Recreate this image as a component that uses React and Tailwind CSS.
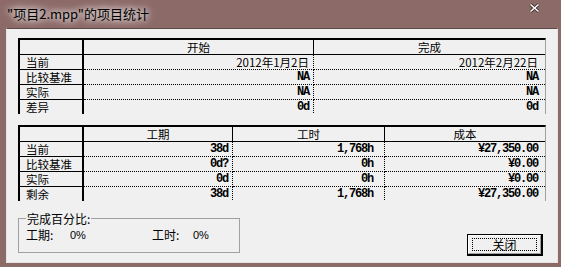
const cjk = "font-['Noto_Sans_CJK_SC',sans-serif]";
const mono = "font-['Liberation_Mono','Noto_Sans_CJK_SC',monospace]";

const table1 = {
  heads: ["开始", "完成"],
  widths: ["w-[230px]", "w-[231px]"],
  pads: ["pr-[4px]", "pr-[7px]"],
  rows: [
    { label: "当前", cells: ["2012年1月2日", "2012年2月22日"], cjk: true },
    { label: "比较基准", cells: ["NA", "NA"] },
    { label: "实际", cells: ["NA", "NA"] },
    { label: "差异", cells: ["0d", "0d"] },
  ],
};

const table2 = {
  heads: ["工期", "工时", "成本"],
  widths: ["w-[149px]", "w-[152px]", "w-[160px]"],
  pads: ["pr-[4px]", "pr-[11px]", "pr-[7px]"],
  rows: [
    { label: "当前", cells: ["38d", "1,768h", "¥27,350.00"] },
    { label: "比较基准", cells: ["0d?", "0h", "¥0.00"] },
    { label: "实际", cells: ["0d", "0h", "¥0.00"] },
    { label: "剩余", cells: ["38d", "1,768h", "¥27,350.00"] },
  ],
};

function StatTable({ heads, widths, pads, rows }) {
  return (
    <div className="h-[76px] w-[528px] overflow-hidden border-t-2 border-l-2 border-r border-black border-r-[#a0a0a0] text-black">
      {/* header */}
      <div className="flex h-[15px]">
        <div className="w-[64px] shrink-0 border-r-2 border-b border-black" />
        {heads.map((h, i) => (
          <div
            key={h}
            className={`${widths[i]} shrink-0 border-b border-black text-center text-[11.5px] leading-[14px] ${cjk} ${i < heads.length - 1 ? "border-r" : ""}`}
          >
            {h}
          </div>
        ))}
      </div>
      {rows.map((r) => (
        <div key={r.label} className="flex h-[15px]">
          <div className={`w-[64px] shrink-0 border-r-2 border-b border-black pl-[6px] text-[11.5px] leading-[14px] ${cjk}`}>
            {r.label}
          </div>
          {r.cells.map((c, i) => (
            <div
              key={i}
              className={`${widths[i]} ${pads[i]} shrink-0 border-b border-dotted border-black text-right leading-[14px] ${r.cjk ? `${cjk} text-[11.5px]` : `${mono} text-[12px] font-bold tracking-[-1.2px]`} ${i < r.cells.length - 1 ? "border-r" : ""}`}
            >
              {c}
            </div>
          ))}
        </div>
      ))}
    </div>
  );
}

export default function App() {
  return (
    <div className="flex h-[267px] w-[561px] flex-col bg-[#8c6a68]">
      {/* Title bar */}
      <div className="flex h-[28px] shrink-0 items-start pl-[7px] pr-[21px]">
        <div className={`mt-[5px] text-[13px] leading-[18px] text-black ${cjk} [text-shadow:0_0_6px_#fff,0_0_10px_#fff]`}>
          "项目2.mpp"的项目统计
        </div>
        <svg className="mt-[3px] ml-auto" width="11" height="10" viewBox="0 0 11 10">
          <path d="M1.5 1.5 L9.5 8.5 M9.5 1.5 L1.5 8.5" stroke="#3a2a2a" strokeWidth="3" />
          <path d="M1.5 1.5 L9.5 8.5 M9.5 1.5 L1.5 8.5" stroke="#fff" strokeWidth="1.6" />
        </svg>
      </div>

      {/* Body */}
      <div className="ml-[6px] h-[235px] w-[552px] border-t border-l border-r border-b border-[#5e4a48] border-l-[#e4e4e4] border-r-[#e4e4e4] border-b-[#e4e4e4] bg-[#f0f0f0] pl-[11px] pt-[9px]">
        <StatTable {...table1} />
        <div className="mt-[11px]">
          <StatTable {...table2} />
        </div>

        {/* Bottom */}
        <div className="mt-[10px] flex w-[525px] justify-between">
          <fieldset className="h-[42px] w-[222px] border border-[#a0a0a0] pl-[7px]">
            <legend className={`px-[1px] text-[12px] leading-[15px] ${cjk}`}>完成百分比:</legend>
            <div className="mt-[2px] flex text-[12px] leading-[14px]">
              <span className={`w-[44px] ${cjk}`}>工期:</span>
              <span className="w-[82px] font-['Liberation_Sans',sans-serif] text-[11px]">0%</span>
              <span className={`w-[41px] ${cjk}`}>工时:</span>
              <span className="font-['Liberation_Sans',sans-serif] text-[11px]">0%</span>
            </div>
          </fieldset>
          <button className="mt-[23px] h-[22px] w-[76px] border border-black border-r-2 border-b-2 bg-[#f0f0f0]">
            <div className="h-full w-full border-t border-l border-white border-r border-b border-r-[#a0a0a0] border-b-[#a0a0a0] px-[3px] py-[2px]">
              <div className={`flex h-full w-full items-center justify-center border border-dotted border-black text-[12px] leading-[14px] ${cjk}`}>
                关闭
              </div>
            </div>
          </button>
        </div>
      </div>
    </div>
  );
}
